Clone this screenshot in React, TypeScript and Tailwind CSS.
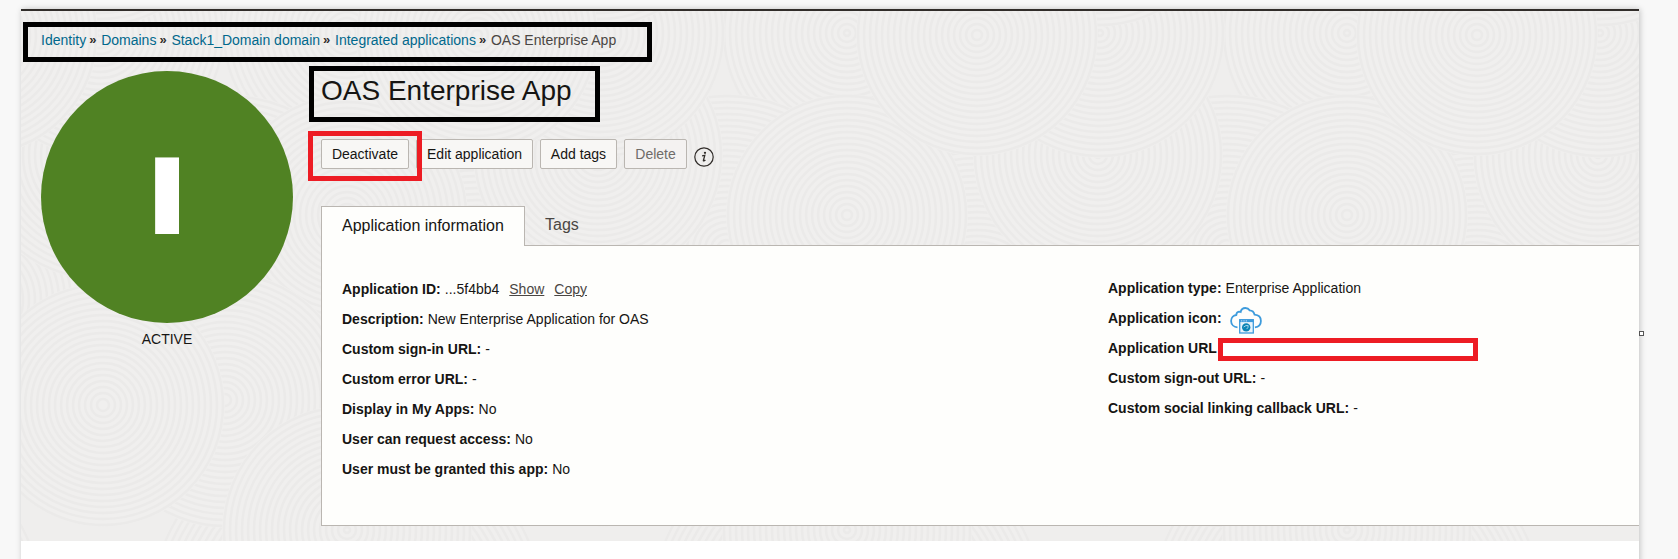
import React from "react";

const discs: [number, number, number][] = [
  [380, 300, 150],
  [250, 33, 125],
  [130, 250, 156],
  [250, 215, 121],
  [128, 400, 128],
  [6, 405, 122],
  [1, 155, 125],
  [3, 33, 125],
  [3, -98, 125],
  [380, 35, 121],
];

function Disc({ cx, cy, r }: { cx: number; cy: number; r: number }) {
  const rings: number[] = [];
  for (let k = r - 2; k > 2; k -= 6) rings.push(k);
  return (
    <g>
      <circle cx={cx} cy={cy} r={r} fill="#f0efee" />
      {rings.map((k) => (
        <circle key={k} cx={cx} cy={cy} r={k} fill="none" stroke="#ebeae9" strokeWidth="2.4" />
      ))}
    </g>
  );
}

function Texture() {
  return (
    <svg className="absolute inset-0 h-full w-full" aria-hidden="true">
      <defs>
        <pattern id="rings" x="76" y="-11" width="500" height="560" patternUnits="userSpaceOnUse">
          <rect width="500" height="560" fill="#efeeed" />
          <Disc cx={250} cy={620} r={200} />
          <Disc cx={-250} cy={620} r={200} />
          {discs.map(([x, y, r], i) => (
            <g key={i}>
              <Disc cx={x} cy={y} r={r} />
              <Disc cx={x + 500} cy={y} r={r} />
              <Disc cx={x - 500} cy={y} r={r} />
            </g>
          ))}
          <Disc cx={250} cy={530} r={125} />
        </pattern>
      </defs>
      <rect width="100%" height="100%" fill="url(#rings)" />
    </svg>
  );
}

function Crumb({ label }: { label: string }) {
  return (
    <>
      <a className="text-[#00688c]">{label}</a>
      <span className="w-[15px] pl-[3px] text-[13px] font-bold text-[#312d2a]">»</span>
    </>
  );
}

function Button({ label, width, disabled }: { label: string; width: string; disabled?: boolean }) {
  return (
    <button
      className={`h-[30px] rounded-[2px] border border-[#bab6b1] text-[14px] leading-[28px] ${width} ${
        disabled ? "bg-[#f4f2f1] text-[#6f6c69]" : "bg-[#f8f7f5] text-[#161513]"
      }`}
    >
      {label}
    </button>
  );
}

function Row({ label, children }: { label: string; children?: React.ReactNode }) {
  return (
    <div className="flex h-[30px] items-center whitespace-nowrap">
      <span className="mr-1 font-bold">{label}</span>
      {children}
    </div>
  );
}

function CloudIcon() {
  return (
    <svg className="ml-1 mt-1" width="32" height="27" viewBox="0 0 32 27" fill="none">
      <path
        d="M7.5 20.3C4 20.1 1.1 17.6 1.1 14c0-3.300 2.300-5.700 5.200-6C6.400 6.200 7.600 4.800 9 4.600c.7 0 1.200.1 1.700.3C11.200 2.600 12.900 1 15.300 1c2 0 3.500.9 4.300 2.300 2.600.1 4.400 1.700 5 4.400 3.800.3 6.300 2.700 6.300 6.200 0 3.300-2.400 5.900-6 6.400"
        stroke="#3d9bdc"
        strokeWidth="1.800"
      />
      <rect x="9.700" y="12.700" width="13.600" height="13.300" fill="#e9f4fb" stroke="#3d9bdc" strokeWidth="1.300" />
      <path d="M9.500 14h14" stroke="#3d9bdc" strokeWidth="2.200" />
      <path d="M11.200 13.900h1M13.500 13.900h1M15.800 13.900h1" stroke="#fff" strokeWidth="0.900" />
      <circle cx="16.200" cy="20.400" r="4.200" fill="#0b84b5" />
      <path d="M13.700 20l2.200-1.400h2.300l-.3 2-1.300 1.500" stroke="#b9dff0" strokeWidth="0.900" />
    </svg>
  );
}

function InfoIcon() {
  return (
    <svg className="ml-[7px] mt-[8px]" width="20" height="20" viewBox="0 0 20 20" fill="none">
      <circle cx="10" cy="10" r="9.200" stroke="#312d2a" strokeWidth="1.200" />
      <circle cx="11" cy="5.800" r="1.150" fill="#312d2a" />
      <path d="M8.100 8.900l2.700-.5-1.400 5c-.2.800.6.700 2-.5" stroke="#312d2a" strokeWidth="1.300" />
    </svg>
  );
}

export default function App() {
  return (
    <div
      className="relative h-[559px] w-[1678px] overflow-hidden bg-[#f8f8f8] pl-[21px] pt-[9px] text-[14px] text-[#161513]"
      style={{ fontFamily: '"Liberation Sans", Arial, sans-serif' }}
    >
      <div className="h-[600px] w-[1618px] bg-white shadow-[1px_0_6px_rgba(0,0,0,0.22)]">
        <div className="relative h-[532px] border-t-2 border-[#312d2a]">
          <Texture />
          <div className="relative flex h-[530px] flex-col">
            <nav className="ml-5 mt-[19px] flex h-5 items-center whitespace-nowrap">
              <Crumb label="Identity" />
              <Crumb label="Domains" />
              <Crumb label="Stack1_Domain domain" />
              <Crumb label="Integrated applications" />
              <span className="text-[#4a4643]">OAS Enterprise App</span>
            </nav>
            <div className="flex">
              <aside className="ml-5 mt-[21px] flex w-[252px] flex-col items-center">
                <div className="flex h-[252px] w-[252px] items-center justify-center rounded-full bg-[#508223] pb-[2px]">
                  <span className="text-[96px] font-bold leading-none text-white [-webkit-text-stroke:10px_white]">
                    I
                  </span>
                </div>
                <div className="mt-[6px] leading-5">ACTIVE</div>
              </aside>
              <main className="ml-[28px] flex w-[1318px] flex-col">
                <h1 className="mt-[25px] h-8 whitespace-nowrap text-[28px] leading-8">OAS Enterprise App</h1>
                <div className="mt-[32px] flex h-[30px] gap-[7px]">
                  <Button label="Deactivate" width="w-[88px]" />
                  <Button label="Edit application" width="w-[117px]" />
                  <Button label="Add tags" width="w-[77px]" />
                  <div className="flex">
                    <Button label="Delete" width="w-[63px]" disabled />
                    <InfoIcon />
                  </div>
                </div>
                <div className="mt-[37px] flex h-[40px] text-[16px]">
                  <div className="relative z-10 h-[40px] w-[204px] border border-b-0 border-[#bab6b1] bg-[#fefefc] pl-5 leading-[37px]">
                    Application information
                  </div>
                  <div className="pl-[20px] leading-[37px] text-[#4a4643]">Tags</div>
                </div>
                <section className="-mt-px flex h-[281px] border border-r-0 border-[#bab6b1] bg-[#fefefc]">
                  <div className="ml-5 mt-[28px] w-[766px]">
                    <Row label="Application ID:">
                      <span>...5f4bb4</span>
                      <a className="ml-[10px] text-[#4a4643] underline">Show</a>
                      <a className="ml-[10px] text-[#4a4643] underline">Copy</a>
                    </Row>
                    <Row label="Description:">New Enterprise Application for OAS</Row>
                    <Row label="Custom sign-in URL:">-</Row>
                    <Row label="Custom error URL:">-</Row>
                    <Row label="Display in My Apps:">No</Row>
                    <Row label="User can request access:">No</Row>
                    <Row label="User must be granted this app:">No</Row>
                  </div>
                  <div className="mt-[27px]">
                    <Row label="Application type:">Enterprise Application</Row>
                    <Row label="Application icon:">
                      <CloudIcon />
                    </Row>
                    <Row label="Application URL" />
                    <Row label="Custom sign-out URL:">-</Row>
                    <Row label="Custom social linking callback URL:">-</Row>
                  </div>
                </section>
              </main>
            </div>
          </div>
        </div>
      </div>

      <div className="absolute left-[23px] top-[22px] z-20 h-[40px] w-[629px] border-[5px] border-black" />
      <div className="absolute left-[309px] top-[66px] z-20 h-[56px] w-[291px] border-[5px] border-black" />
      <div className="absolute left-[308px] top-[131px] z-20 h-[50px] w-[114px] border-[5px] border-[#ed1c24]" />
      <div className="absolute left-[1218px] top-[338px] z-20 h-[23px] w-[260px] border-[5px] border-[#ed1c24] bg-white" />
      <div className="absolute left-[1639px] top-[331px] z-20 h-[5px] w-[5px] border border-[#555] bg-white" />
    </div>
  );
}
